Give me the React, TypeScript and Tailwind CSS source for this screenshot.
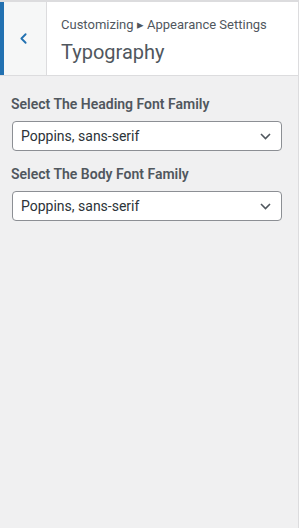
import { ChevronLeft } from 'lucide-react'

type Field = { label: string; value: string }

const fields: Field[] = [
  { label: 'Select The Heading Font Family', value: 'Poppins, sans-serif' },
  { label: 'Select The Body Font Family', value: 'Poppins, sans-serif' },
]

function FakeSelect({ value }: { value: string }) {
  return (
    <div className="h-[30px] flex items-center justify-between bg-white border border-[#8c8f94] rounded-[4px] pl-2 pr-[10px]">
      <span className="text-[14px] text-[#2c3338]">{value}</span>
      <svg width="11" height="7" viewBox="0 0 11 7" fill="none" className="text-[#50575e]">
        <path d="M1 1l4.5 4.5L10 1" stroke="currentColor" strokeWidth="1.6" />
      </svg>
    </div>
  )
}

export default function App() {
  return (
    <div className="w-[299px] h-[528px] bg-[#f0f0f1] border-r border-[#dcdcde] font-['Roboto',sans-serif] overflow-hidden">
      <div className="h-[2px] bg-[#dcdcde]" />
      <div className="flex h-[74px] bg-white border-b border-[#dcdcde]">
        <button className="w-[47px] shrink-0 flex items-center justify-center bg-[#f6f7f7] border-l-4 border-[#2271b1] border-r border-r-[#dcdcde] pr-[3px]">
          <ChevronLeft size={17} strokeWidth={2.6} className="text-[#2271b1]" />
        </button>
        <div className="pl-[14px] pt-[14px]">
          <div className="text-[13px] leading-[18px] text-[#50575e]">Customizing ▸ Appearance Settings</div>
          <div className="text-[20px] leading-[28px] mt-[4px] text-[#50575e]">Typography</div>
        </div>
      </div>

      <div className="px-3 pt-[18px]">
        {fields.map((f, i) => (
          <div key={f.label} className={i > 0 ? 'mt-[13px]' : ''}>
            <div className="text-[14px] leading-[20px] font-semibold text-[#50575e] mb-[7px] -ml-[1px]">{f.label}</div>
            <div className="w-[270px]">
              <FakeSelect value={f.value} />
            </div>
          </div>
        ))}
      </div>
    </div>
  )
}
